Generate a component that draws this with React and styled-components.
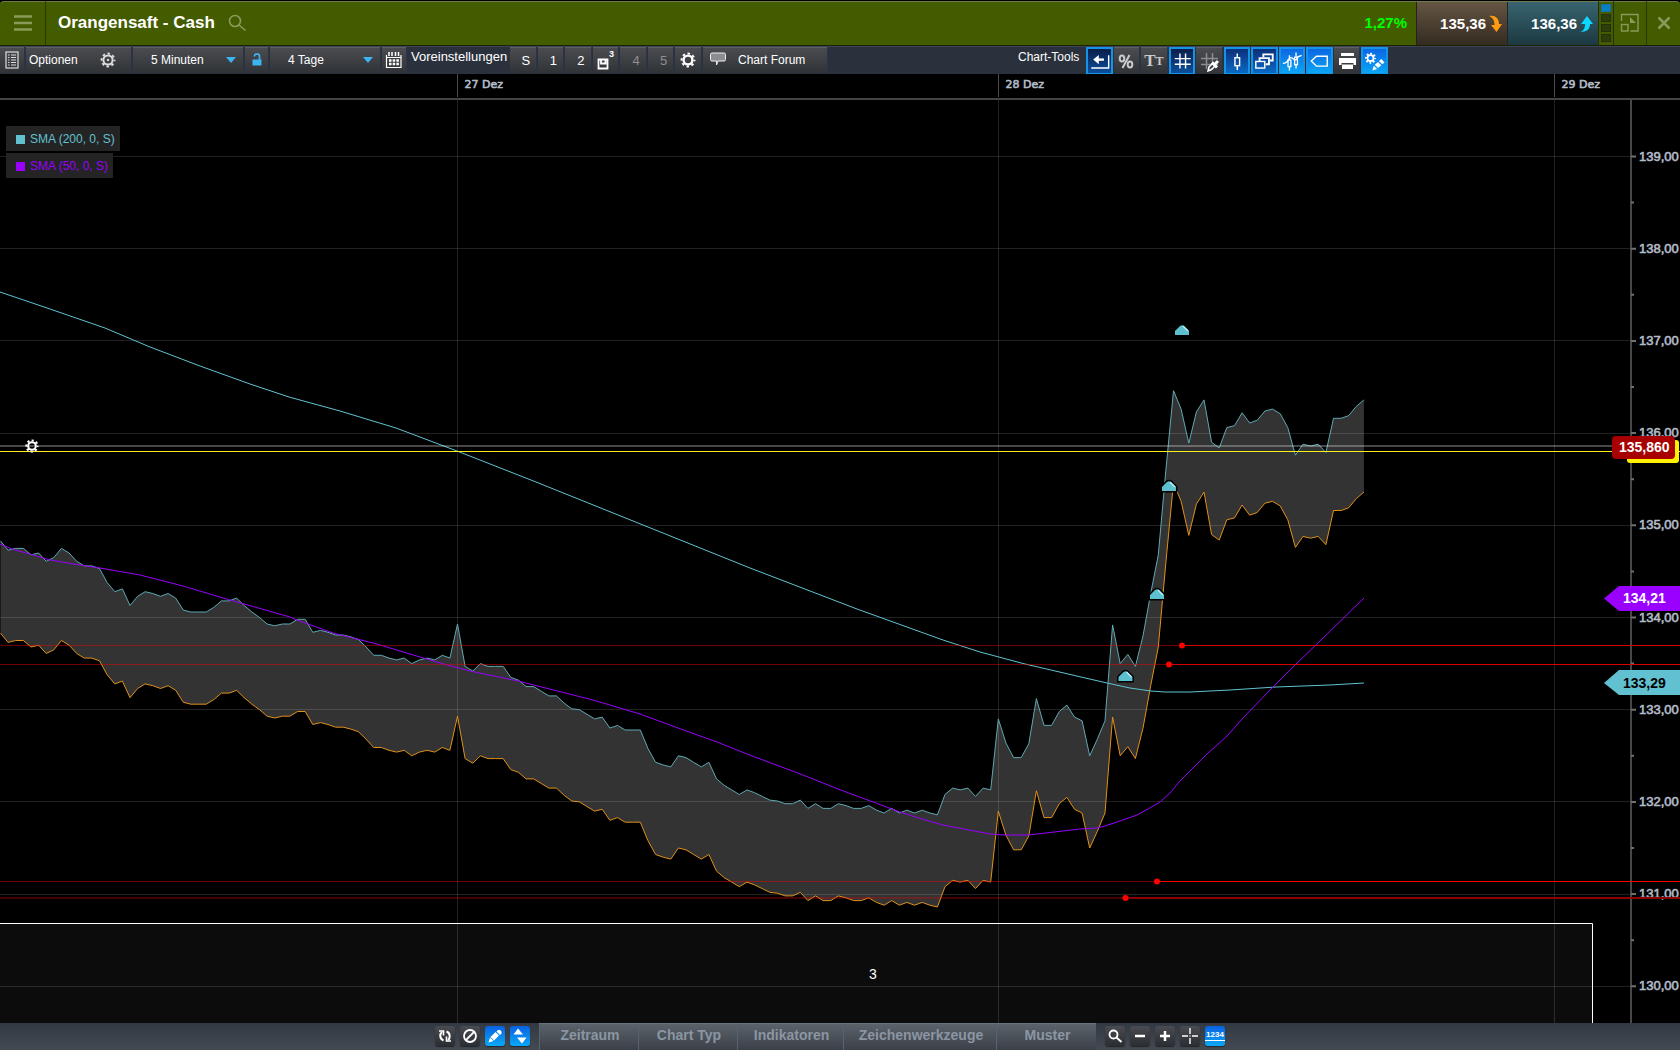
import styled, { createGlobalStyle, css } from "styled-components";

const GlobalStyle = createGlobalStyle`
  * {
    box-sizing: border-box;
  }

  html,
  body {
    margin: 0;
    background-color: #000;
  }

  body,
  button,
  select {
    font-family: "Liberation Sans", Arial, sans-serif;
  }
`;

const Page = styled.div`
  display: flex;
  flex-direction: column;
  height: 100vh;
  overflow: hidden;
  background-color: #000;
  color: #fff;
`;

/* ---------- title bar ---------- */

const TitleBar = styled.header`
  display: flex;
  flex: none;
  height: 46px;
  background-color: #435c00;
  border-top: 1px solid #000;
  border-bottom: 1px solid #1c2200;
  border-radius: 4px 4px 0 0;
  box-shadow: inset 0 1px 0 #6f7a4c;
`;

const TitleButton = styled.button`
  display: flex;
  align-items: center;
  justify-content: center;
  width: ${(props) => props.$width || 33}px;
  padding: 0;
  border: 0;
  border-right: ${(props) => (props.$divider ? "1px solid #2a3900" : "0")};
  background: none;
  color: #8a9a5a;
  cursor: pointer;
`;

const Title = styled.h1`
  margin: 0;
  padding: 0 6px 0 12px;
  font-size: 17px;
  font-weight: 700;
  line-height: 44px;
  white-space: nowrap;
`;

const TitleSpace = styled.div`
  flex: 1;
`;

const Change = styled.span`
  padding-right: 9px;
  color: #0f0;
  font-size: 15px;
  font-weight: 700;
  line-height: 44px;
`;

const PriceButton = styled.button`
  display: flex;
  align-items: center;
  justify-content: flex-end;
  gap: 2px;
  width: 91px;
  margin-top: 1px;
  padding: 0 5px 0 0;
  border: 0;
  border-left: 1px solid #222;
  background: ${(props) =>
    props.$buy
      ? "linear-gradient(#386470, #1c3840)"
      : "linear-gradient(#655543, #342b21)"};
  color: #fff;
  font-size: 15px;
  font-weight: 700;
  cursor: pointer;
`;

const Leds = styled.div`
  display: flex;
  flex-direction: column;
  gap: 2px;
  width: 16px;
  padding: 3px 2px 0;
  border-left: 1px solid #24300a;
  border-right: 1px solid #24300a;
`;

const Led = styled.span`
  height: 8px;
  border: 1px solid ${(props) => (props.$on ? "#1170a8" : "#24310a")};
  background-color: ${(props) => (props.$on ? "#0a80c4" : "#2e3d0c")};
`;

/* ---------- toolbar ---------- */

const Toolbar = styled.nav`
  display: flex;
  flex: none;
  gap: 1px;
  height: 28px;
  padding-bottom: 1px;
  background-color: #2b313c;
  border-top: 1px solid #3c4456;
`;

const buttonFace = css`
  border: 0;
  border-right: 1px solid #2b3448;
  background: linear-gradient(#4b4d51, #2f3236);
  box-shadow: inset 0 1px 0 #5d6064;
`;

const ToolButton = styled.button`
  ${buttonFace}
  display: flex;
  align-items: center;
  justify-content: ${(props) => (props.$spread ? "space-between" : "center")};
  width: ${(props) => (props.$width ? `${props.$width}px` : "auto")};
  padding: ${(props) => (props.$spread ? "0 14px 0 3px" : "0")};
  color: ${(props) => (props.$muted ? "#8d8f92" : "#fff")};
  font-size: 12px;
  cursor: pointer;

  ${(props) =>
    props.$blue &&
    css`
      border: 2px solid #1394e6;
      border-bottom-width: 1px;
      box-shadow: none;
      background: ${{
        dark: "linear-gradient(#0a1d4a, #0b4f9c)",
        mid: "linear-gradient(#0c2f78, #0a6ac6)",
        bright: "linear-gradient(#0c66e4, #0aa6f6)",
      }[props.$blue]};
    `}
`;

const PresetButton = styled(ToolButton)`
  padding-left: 6px;
  font-size: 13px;
`;

const ForumButton = styled(ToolButton)`
  justify-content: flex-start;
  gap: 8px;
  padding-left: 3px;
`;

const SelectBox = styled.label`
  ${buttonFace}
  display: flex;
  align-items: center;
  width: 111px;
  padding-right: 7px;
`;

const Select = styled.select`
  flex: 1;
  min-width: 0;
  height: 100%;
  padding: 0 0 0 18px;
  appearance: none;
  border: 0;
  outline: 0;
  background: none;
  color: #fff;
  font-size: 12px;

  option {
    color: #000;
  }
`;

const ToolLabel = styled.span`
  padding-left: 3px;
  width: ${(props) => props.$width}px;
  font-size: ${(props) => props.$size}px;
  line-height: 20px;
  white-space: nowrap;
`;

const ButtonGrid = styled.div`
  display: grid;
  grid-template-columns: repeat(${(props) => props.$count}, minmax(0, 1fr));
  column-gap: 1px;
  width: ${(props) => props.$width}px;
`;

const Tools = styled.div`
  display: flex;
  margin-left: 186px;
`;

const SerifT = styled.span`
  font-family: "Liberation Serif", serif;
  font-weight: 700;
  font-size: ${(props) => props.$size}px;
  line-height: 20px;
  color: #c9cacb;
`;

const SavedSlot = styled.span`
  display: flex;
  align-items: flex-end;
  height: 24px;
  padding-bottom: 2px;
`;

const SlotNumber = styled.sup`
  align-self: flex-start;
  font-size: 9px;
  font-weight: 700;
  line-height: 12px;
`;

/* ---------- chart ---------- */

const ChartArea = styled.main`
  position: relative;
  flex: 1;
  min-height: 0;
`;

const Chart = styled.svg`
  display: block;
  width: 100%;
  height: 100%;
`;

const AxisText = styled.text`
  fill: #b4bcc8;
  stroke: #b4bcc8;
  stroke-width: 0.6;
  font-family: ${(props) =>
    props.$date
      ? '"DejaVu Sans", sans-serif'
      : '"Liberation Sans", Arial, sans-serif'};
  font-size: ${(props) => (props.$date ? 11 : 13)}px;
`;

const TagText = styled.text`
  fill: ${(props) => props.$color || "#fff"};
  font-family: "Liberation Sans", Arial, sans-serif;
  font-size: 14px;
  font-weight: 700;
`;

const CountText = styled.text`
  fill: #fff;
  font-family: "Liberation Sans", Arial, sans-serif;
  font-size: 14px;
`;

const Legend = styled.ul`
  position: absolute;
  top: 52px;
  left: 6px;
  display: flex;
  flex-direction: column;
  align-items: flex-start;
  gap: 2px;
  margin: 0;
  padding: 0;
  list-style: none;
`;

const LegendItem = styled.li`
  display: flex;
  align-items: center;
  gap: 5px;
  height: 25px;
  padding: 1px 5px 0 10px;
  background-color: #242424;
  color: ${(props) => props.$color};
  font-size: 12px;

  &::before {
    content: "";
    width: 9px;
    height: 9px;
    background-color: currentColor;
  }
`;

/* ---------- bottom bar ---------- */

const BottomBar = styled.footer`
  display: flex;
  flex: none;
  justify-content: center;
  gap: 9px;
  height: 27px;
  padding-right: 20px;
  background: linear-gradient(#333942, #444a52);
`;

const RoundGroup = styled.div`
  display: flex;
  align-items: center;
  gap: 5px;
  padding-bottom: 1px;
`;

const RoundButton = styled.button`
  display: flex;
  align-items: center;
  justify-content: center;
  width: 20px;
  height: 20px;
  padding: 0;
  border: 0;
  border-radius: 3px;
  background: ${(props) =>
    props.$active
      ? "linear-gradient(#0a62e0, #0aa8f8)"
      : "linear-gradient(#4a4c51, #2a2d31)"};
  color: #fff;
  font-size: 8px;
  font-weight: 700;
  box-shadow: 0 1px 1px #22262b;
  cursor: pointer;
`;

const Digits = styled.span`
  width: 100%;
  padding-bottom: 1px;
  border-bottom: 1px solid #fff;
  line-height: 8px;
`;

const Tabs = styled.div`
  display: flex;
  border-top: 1px solid #6a737b;
`;

const Tab = styled.button`
  width: ${(props) => props.$width}px;
  padding: 0 0 4px 2px;
  border: 0;
  border-left: 1px solid #59636f;
  background: linear-gradient(#5a626a, #3b4048);
  color: #8b95a3;
  font-size: 14px;
  font-weight: 700;
  cursor: pointer;
`;

/* ---------- icons ---------- */

const Icon = ({ size = 24, children, ...rest }) => (
  <svg
    width={size}
    height={size}
    viewBox={`0 0 ${size} ${size}`}
    fill="none"
    stroke="currentColor"
    strokeWidth="1.5"
    aria-hidden="true"
    {...rest}
  >
    {children}
  </svg>
);

const GearShape = ({ r = 4.4, cx = 8, cy = 8, width = 2.4 }) => {
  const outer = r + width / 2 + 0.8;
  const tooth = (2 * Math.PI * outer) / 16;
  return (
    <g>
      <circle cx={cx} cy={cy} r={r} strokeWidth={width} />
      <circle
        cx={cx}
        cy={cy}
        r={outer}
        strokeWidth="2"
        strokeDasharray={`${tooth} ${tooth}`}
        strokeDashoffset={tooth / 2}
      />
    </g>
  );
};

const Caret = () => (
  <svg width="10" height="6" viewBox="0 0 10 6" aria-hidden="true">
    <path d="M0 0h10L5 6z" fill="#3db4f2" />
  </svg>
);

const ListIcon = () => (
  <Icon size={18} stroke="#dcdcdc" strokeWidth="1.2">
    <rect x="3" y="1" width="12" height="16" />
    <path d="M5 4h1.500M8 4h5M5 6.500h1.500M8 6.500h5M5 9h1.500M8 9h5M5 11.500h1.500M8 11.500h5M5 14h1.500M8 14h5" />
  </Icon>
);

const LockIcon = () => (
  <Icon size={16} stroke="#3db4f2">
    <rect x="4" y="8" width="8" height="5" fill="#3db4f2" strokeWidth="1" />
    <path d="M5.500 4.500V4a1.800 1.800 0 0 1 1.800-1.800h1.400A1.800 1.800 0 0 1 10.500 4v4" strokeWidth="1.700" />
  </Icon>
);

const CalendarIcon = () => (
  <Icon size={18} strokeWidth="1.2">
    <path d="M1.500 4v12.500h14.500V4M1.500 6.500h14.500" />
    <path d="M4 1v4M7 1v4M10.500 1v4M13.500 1v4" strokeWidth="1.500" />
    <path d="M4 9.500h2.500M7.700 9.500h2.500M11.400 9.500h2.500M4 13h2.500M7.700 13h2.500M11.400 13h2.500" strokeWidth="2.400" />
  </Icon>
);

const GRID_PATH = "M9.500 4v16M15.500 4v16M4 9.500h17M4 15.500h17";

const chartTools = [
  {
    label: "Scroll to end",
    blue: "dark",
    icon: (
      <Icon>
        <path d="M22 6v13.500H3.500" />
        <path d="M9 10.500h8" strokeWidth="2.500" />
        <path d="M5.500 10.500l6-5v10z" fill="currentColor" stroke="none" />
      </Icon>
    ),
  },
  {
    label: "Percent",
    icon: (
      <Icon stroke="#c9cacb" strokeWidth="2">
        <ellipse cx="8" cy="9.500" rx="2.300" ry="3" />
        <ellipse cx="16" cy="15.500" rx="2.300" ry="3" />
        <path d="M15.500 6L8.500 19" />
      </Icon>
    ),
  },
  {
    label: "Text size",
    icon: (
      <>
        <SerifT $size={17}>T</SerifT>
        <SerifT $size={12}>T</SerifT>
      </>
    ),
  },
  {
    label: "Grid",
    blue: "dark",
    icon: (
      <Icon>
        <path d={GRID_PATH} />
      </Icon>
    ),
  },
  {
    label: "Grid colour",
    icon: (
      <Icon>
        <path d={GRID_PATH} stroke="#8b8d8f" />
        <path d="M11 22l1-4 4-4 2.500 2.500-4 4z" stroke="#fff" fill="#3c3f42" />
        <path d="M15 13.500l5 5M17.500 15.500l3.500-3.500" stroke="#fff" strokeWidth="3" />
      </Icon>
    ),
  },
  {
    label: "Candles",
    blue: "mid",
    icon: (
      <Icon>
        <path d="M12 4v4.500M12 17v4.500" />
        <rect x="9.500" y="8.500" width="5" height="8.500" />
      </Icon>
    ),
  },
  {
    label: "Windows",
    blue: "mid",
    icon: (
      <Icon>
        <rect x="3" y="12.500" width="9.500" height="7" />
        <path d="M7 12V9h10v6.500h-3.500" strokeWidth="2" />
        <path d="M11 8V5h10v6.500h-3" strokeWidth="2" />
      </Icon>
    ),
  },
  {
    label: "Indicators",
    blue: "bright",
    icon: (
      <Icon strokeWidth="1.4">
        <path d="M2 14.500q4 0 6-4t6 0q3 1 4-3l4-1.500" />
        <path d="M9 6v5M9 18v4M16 3v5M16 16v4" />
        <rect x="7.500" y="11" width="3" height="7" />
        <rect x="14.500" y="8" width="3" height="8" />
      </Icon>
    ),
  },
  {
    label: "Price tag",
    blue: "bright",
    icon: (
      <Icon>
        <path d="M3.500 12l5.500-5h11.500v10.500H9z" />
      </Icon>
    ),
  },
  {
    label: "Print",
    icon: (
      <Icon fill="currentColor" stroke="none">
        <path d="M6 4h13v3H6zM4 9h17v7h-2.500v-2h-12v2H4zM7 15.500h11V20H7z" />
      </Icon>
    ),
  },
  {
    label: "Chart settings",
    blue: "bright",
    icon: (
      <Icon>
        <GearShape cx={8} cy={9} r={3.2} width={1.8} />
        <path d="M10 22l1.500-5 3.500 3.500zM12.500 16l3.500-3 3.500 3.500-3.500 3zM17 12l2.500-2 3.500 3.500-2.500 2z" fill="currentColor" stroke="none" />
      </Icon>
    ),
  },
];

const drawTools = [
  {
    label: "Reset",
    icon: (
      <Icon size={16} strokeWidth="2">
        <path d="M6.500 12.500C2.500 11 2.500 6 5 4M9.500 3.500C13.500 5 13.500 10 11 12" />
        <path d="M2 3h4.500v4.500M14 13H9.500V8.500" strokeWidth="1.600" />
      </Icon>
    ),
  },
  {
    label: "Disable",
    icon: (
      <Icon size={16} strokeWidth="1.8">
        <circle cx="8" cy="8" r="6" />
        <path d="M4 12l8-8" />
      </Icon>
    ),
  },
  {
    label: "Draw",
    active: true,
    icon: (
      <Icon size={16} fill="currentColor" stroke="none">
        <path d="M1.500 14.500l1.500-5 3.500 3.500zM3.500 9l5-5 3.500 3.500-5 5zM9.500 3.500L11 2h2l1.500 1.500v2L13 7z" />
      </Icon>
    ),
  },
  {
    label: "Expand",
    active: true,
    icon: (
      <Icon size={16} fill="currentColor" stroke="none">
        <path d="M6 0.500l5 6H1.500zM10 15.500l-5-6h9.500z" />
      </Icon>
    ),
  },
];

const zoomTools = [
  {
    label: "Zoom",
    icon: (
      <Icon size={16} strokeWidth="1.8">
        <circle cx="6.500" cy="6.500" r="4" />
        <path d="M9.500 9.500l5 4.500" />
      </Icon>
    ),
  },
  {
    label: "Zoom out",
    icon: (
      <Icon size={16} strokeWidth="2.5">
        <path d="M3 8h10" />
      </Icon>
    ),
  },
  {
    label: "Zoom in",
    icon: (
      <Icon size={16} strokeWidth="2.5">
        <path d="M3 8h10M8 3v10" />
      </Icon>
    ),
  },
  {
    label: "Crosshair",
    icon: (
      <Icon size={18} strokeWidth="1.4">
        <path d="M1 9h6M11 9h6M9 1v6M9 11v6M8.500 9h1" />
      </Icon>
    ),
  },
];

const tabs = [
  { label: "Zeitraum", width: 99 },
  { label: "Chart Typ", width: 99 },
  { label: "Indikatoren", width: 106 },
  { label: "Zeichenwerkzeuge", width: 153 },
  { label: "Muster", width: 100 },
];

/* ---------- chart data ---------- */

// ask price in cents above 130,00, one value per bar
const ask = [
  483, 473, 475, 475, 468, 470, 461, 465, 475, 470, 461, 456, 456, 453, 438,
  428, 431, 413, 423, 428, 426, 423, 426, 421, 408, 406, 406, 406, 411, 418,
  418, 421, 413, 406, 400, 393, 391, 393, 393, 398, 398, 384, 386, 384, 381,
  381, 379, 376, 368, 359, 359, 356, 354, 356, 350, 354, 356, 354, 359, 356,
  393, 347, 342, 350, 347, 347, 347, 335, 332, 325, 325, 320, 315, 315, 307,
  301, 300, 295, 290, 292, 280, 283, 278, 278, 278, 258, 243, 240, 238, 250,
  248, 243, 238, 243, 225, 218, 213, 208, 213, 210, 206, 202, 201, 198, 198,
  202, 193, 198, 193, 193, 198, 196, 193, 193, 196, 191, 188, 193, 188, 191,
  188, 191, 188, 186, 208, 215, 213, 215, 206, 215, 213, 290, 264, 248, 248,
  263, 312, 283, 283, 298, 305, 292, 288, 250, 268, 288, 392, 350, 360, 347,
  380, 426, 468, 560, 646, 626, 589, 623, 636, 590, 584, 606, 608, 622, 611,
  614, 624, 626, 621, 606, 576, 588, 586, 588, 579, 616, 616, 619, 629, 636,
];

const SPREAD = 100;
const BAR_STEP = 7.617;
const UNIT = 92.2;

const yOf = (price) => 156.5 + (139 - price) * UNIT;
const barPoint = (cents, i) =>
  `${(i * BAR_STEP + 0.5).toFixed(1)},${yOf(130 + cents / 100).toFixed(1)}`;

const askPoints = ask.map(barPoint);
const bidPoints = ask.map((cents, i) => barPoint(cents - SPREAD, i));
const bandPoints = [...askPoints, ...[...bidPoints].reverse()].join(" ");

const sma200 =
  "0,292 50,309 105,328 150,347 200,366 250,384 289,397 340,411 396,428 457,451 536,482 643,525 750,568 857,609 943,640 980,652 1025,664 1107,683 1130,688 1151,691 1165,692 1190,692 1230,690 1276,687 1330,685 1364,683";

const sma50 =
  "0,544 12,549 30,554 50,560 80,565 100,568 140,575 183,586 230,600 290,617 297,620 333,633 377,644 410,654 447,665 470,671 518,681 593,700 640,714 678,728 717,742 747,754 803,775 838,789 873,802 900,812 922,819 943,825 990,834 1005,835 1028,835 1037,834 1080,829 1097,828 1105,826 1117,822 1137,815 1148,809 1160,802 1170,793 1180,781 1188,773 1207,754 1227,736 1243,718 1273,687 1293,667 1320,641 1364,598";

const days = [
  { x: 457.5, label: "27 Dez" },
  { x: 998.5, label: "28 Dez" },
  { x: 1554.5, label: "29 Dez" },
];

const prices = [139, 138, 137, 136, 135, 134, 133, 132, 131, 130];

const stops = [
  { x: 1182, y: 645.5, width: 1, color: "#d80000", arrow: 325 },
  { x: 1169, y: 664.5, width: 1, color: "#d80000", arrow: 481 },
  { x: 1157, y: 881.5, width: 1, color: "#f00", arrow: 589 },
  { x: 1125.5, y: 898, width: 2, color: "#8c0000", arrow: 671 },
];

const PriceChart = () => (
  <Chart
    viewBox="0 74 1680 949"
    preserveAspectRatio="xMaxYMin slice"
    role="img"
    aria-label="Orangensaft - Cash"
  >
    <polygon points={bandPoints} fill="#333" />
    <rect x="-2" y="923.500" width="1594.500" height="110" fill="#0c0c0c" />

    <g stroke="#fff" strokeOpacity="0.13">
      {days.map((day) => (
        <path key={day.label} d={`M${day.x} 100V1023`} />
      ))}
      {prices.map((price) => (
        <path key={price} d={`M0 ${Math.floor(yOf(price)) + 0.5}H1630`} />
      ))}
    </g>

    <polyline points={askPoints.join(" ")} fill="none" stroke="#5fa9b3" />
    <polyline points={bidPoints.join(" ")} fill="none" stroke="#e0901c" />
    <polyline points={sma200} fill="none" stroke="#5fc3d1" />
    <polyline points={sma50} fill="none" stroke="#9900ff" />

    <path d="M0 923.500H1592.500V1030" fill="none" stroke="#fff" />
    <CountText x="869" y="979">
      3
    </CountText>

    <path d="M0 446H1630" stroke="#fff" strokeOpacity="0.28" strokeWidth="2" />
    <path d="M0 451.500H1680" stroke="#fff01a" shapeRendering="crispEdges" />

    {/* time axis */}
    <path d="M0 99H1680" stroke="#444" strokeWidth="2" />
    {days.map((day) => (
      <g key={day.label}>
        <path d={`M${day.x} 74V97`} stroke="#4c4c4c" />
        <AxisText $date x={day.x + 7} y="88">
          {day.label}
        </AxisText>
      </g>
    ))}

    {/* price axis */}
    <path d="M1631 100V1023" stroke="#474747" strokeWidth="2" />
    {prices.map((price) => (
      <g key={price}>
        <path
          d={`M1631 ${yOf(price)}h5M1631 ${yOf(price - 0.5)}h3`}
          stroke="#707070"
          strokeWidth="2"
        />
        <AxisText x="1639" y={Math.round(yOf(price) + 4)}>
          {`${price},00`}
        </AxisText>
      </g>
    ))}

    {stops.map((stop) => (
      <g key={stop.x}>
        <path
          d={`M0 ${stop.y}H${stop.x}`}
          stroke="#f00"
          strokeOpacity={stop.width === 2 ? 0.28 : 0.45}
          strokeWidth={stop.width}
        />
        <path
          d={`M${stop.x} ${stop.y}H1680`}
          stroke={stop.color}
          strokeWidth={stop.width}
        />
        <circle cx={stop.x} cy={stop.y} r="3" fill="#f00" />
        <g transform={`translate(${stop.x} ${stop.arrow})`}>
          <path
            d="M-7 10V6L-2 1Q0-.5 2 1L7 6V10z"
            fill="#5cc0cf"
            stroke="#000"
            strokeWidth="3"
            paintOrder="stroke"
          />
          <path d="M1 1L6 6" stroke="#b5eef5" strokeWidth="1.500" />
        </g>
      </g>
    ))}

    <g fill="none" stroke="#fff">
      <GearShape cx={32} cy={446} r={3.8} width={2} />
    </g>

    <rect x="1627" y="440" width="52" height="23" rx="3" fill="#fff200" />
    <rect x="1612" y="436" width="63" height="23" rx="4" fill="#a80000" />
    <TagText x="1619" y="452">
      135,860
    </TagText>

    <path d="M1604 598.500L1619 586H1680V611H1619z" fill="#9900ff" />
    <TagText x="1623" y="603">
      134,21
    </TagText>

    <path d="M1604 683L1619 670H1680V695H1619z" fill="#62c1d0" />
    <TagText x="1623" y="688" $color="#000">
      133,29
    </TagText>
  </Chart>
);

const Header = () => (
  <TitleBar>
    <TitleButton $width={46} $divider aria-label="Menu">
      <Icon size={18} strokeWidth="2.5">
        <path d="M0 2.500h18M0 9h18M0 15.500h18" />
      </Icon>
    </TitleButton>
    <Title>Orangensaft - Cash</Title>
    <TitleButton aria-label="Search">
      <Icon size={18} strokeWidth="1.6">
        <circle cx="7" cy="7" r="5.500" />
        <path d="M11 11l6.500 5.500" />
      </Icon>
    </TitleButton>
    <TitleSpace />
    <Change>1,27%</Change>
    <PriceButton>
      135,36
      <svg width="14" height="18" viewBox="0 0 14 18" aria-hidden="true">
        <path d="M1 1c6-1 10 2 10 8h3l-5.500 8L3 10h3.500c0-4-1-7-5.500-9z" fill="#ff9b0f" />
      </svg>
    </PriceButton>
    <PriceButton $buy>
      136,36
      <svg width="14" height="18" viewBox="0 0 14 18" aria-hidden="true">
        <path d="M1 17c7 0 10-3 10-8h3L8 1 2 9h4c0 4-1 6.500-5 8z" fill="#0cd8ff" />
      </svg>
    </PriceButton>
    <Leds>
      <Led $on />
      <Led />
      <Led />
      <Led />
    </Leds>
    <TitleButton $divider aria-label="Restore">
      <Icon size={20} strokeWidth="1.4">
        <path d="M1.500 8V1.500h16.500v16.500H10.500" />
        <rect x="1.500" y="11.500" width="6.500" height="6.500" />
        <path d="M10 4.500l5 6M10 4v6h6z" fill="currentColor" stroke="none" />
      </Icon>
    </TitleButton>
    <TitleButton aria-label="Close">
      <Icon size={14} strokeWidth="2.5">
        <path d="M1.500 1.500l11 11M12.500 1.500l-11 11" />
      </Icon>
    </TitleButton>
  </TitleBar>
);

const ChartToolbar = () => (
  <Toolbar>
    <ToolButton $width={25} aria-label="List">
      <ListIcon />
    </ToolButton>
    <ToolButton $width={106} $spread>
      Optionen
      <Icon size={18} stroke="#dcdcdc">
        <GearShape cx={9} cy={9} r={4.6} width={2} />
        <circle cx="9" cy="9" r="1.200" fill="#dcdcdc" stroke="none" />
      </Icon>
    </ToolButton>
    <SelectBox>
      <Select aria-label="Intervall" defaultValue="5 Minuten">
        <option>5 Minuten</option>
      </Select>
      <Caret />
    </SelectBox>
    <ToolButton $width={24} aria-label="Lock">
      <LockIcon />
    </ToolButton>
    <SelectBox>
      <Select aria-label="Zeitraum" defaultValue="4 Tage">
        <option>4 Tage</option>
      </Select>
      <Caret />
    </SelectBox>
    <ToolButton $width={25} aria-label="Calendar">
      <CalendarIcon />
    </ToolButton>
    <ToolLabel $width={101} $size={13}>
      Voreinstellungen
    </ToolLabel>
    <ButtonGrid $count={7} $width={192}>
      <PresetButton>S</PresetButton>
      <PresetButton>1</PresetButton>
      <PresetButton>2</PresetButton>
      <ToolButton>
        <SavedSlot>
          <Icon size={12} strokeWidth="1.8">
            <path d="M1.500 1.500h9v9h-9zM4 1.500v4h4.500v-4" />
          </Icon>
          <SlotNumber>3</SlotNumber>
        </SavedSlot>
      </ToolButton>
      <PresetButton $muted>4</PresetButton>
      <PresetButton $muted>5</PresetButton>
      <ToolButton aria-label="Settings">
        <Icon size={16}>
          <GearShape />
        </Icon>
      </ToolButton>
    </ButtonGrid>
    <ForumButton $width={125}>
      <Icon size={24} stroke="#eee" strokeWidth="1">
        <path d="M6 5h12q1.500 0 1.500 1.500v5Q19.500 13 18 13h-6l-1.500 4V13H6q-1.500 0-1.500-1.500v-5Q4.500 5 6 5z" fill="#8b8d90" />
      </Icon>
      Chart Forum
    </ForumButton>
    <Tools>
      <ToolLabel $width={71} $size={12}>
        Chart-Tools
      </ToolLabel>
      <ButtonGrid $count={11} $width={302}>
        {chartTools.map((tool) => (
          <ToolButton key={tool.label} $blue={tool.blue} aria-label={tool.label}>
            {tool.icon}
          </ToolButton>
        ))}
      </ButtonGrid>
    </Tools>
  </Toolbar>
);

const Footer = () => (
  <BottomBar>
    <RoundGroup>
      {drawTools.map((tool) => (
        <RoundButton key={tool.label} $active={tool.active} aria-label={tool.label}>
          {tool.icon}
        </RoundButton>
      ))}
    </RoundGroup>
    <Tabs>
      {tabs.map((tab) => (
        <Tab key={tab.label} $width={tab.width}>
          {tab.label}
        </Tab>
      ))}
    </Tabs>
    <RoundGroup>
      {zoomTools.map((tool) => (
        <RoundButton key={tool.label} aria-label={tool.label}>
          {tool.icon}
        </RoundButton>
      ))}
      <RoundButton $active>
        <Digits>1234</Digits>
      </RoundButton>
    </RoundGroup>
  </BottomBar>
);

const App = () => {
  return (
    <Page>
      <GlobalStyle />
      <Header />
      <ChartToolbar />
      <ChartArea>
        <PriceChart />
        <Legend>
          <LegendItem $color="#62c1d0">SMA (200, 0, S)</LegendItem>
          <LegendItem $color="#9900ff">SMA (50, 0, S)</LegendItem>
        </Legend>
      </ChartArea>
      <Footer />
    </Page>
  );
};

export default App;
